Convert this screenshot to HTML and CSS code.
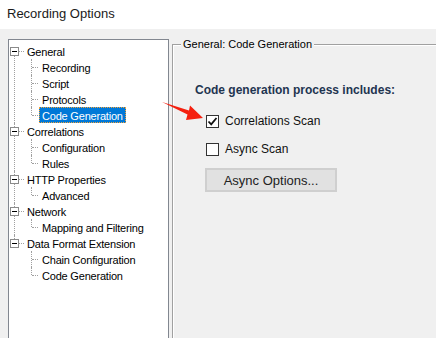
FILE: index.html
```html
<!DOCTYPE html>
<html lang="en">
<head>
  <meta charset="UTF-8">
  <title>Recording Options</title>
  <link rel="stylesheet" href="styles.css">
</head>
<body>
  <div class="titlebar">Recording Options</div>

  <div class="content">
    <div class="tree">
      <ul class="roots">
        <li>
          <div class="row"><span class="toggle"></span><span class="conn"></span><span class="label">General</span></div>
          <ul class="kids">
            <li><span class="label">Recording</span></li>
            <li><span class="label">Script</span></li>
            <li><span class="label">Protocols</span></li>
            <li><span class="label selected">Code Generation</span></li>
          </ul>
        </li>
        <li>
          <div class="row"><span class="toggle"></span><span class="conn"></span><span class="label">Correlations</span></div>
          <ul class="kids">
            <li><span class="label">Configuration</span></li>
            <li><span class="label">Rules</span></li>
          </ul>
        </li>
        <li>
          <div class="row"><span class="toggle"></span><span class="conn"></span><span class="label">HTTP Properties</span></div>
          <ul class="kids">
            <li><span class="label">Advanced</span></li>
          </ul>
        </li>
        <li>
          <div class="row"><span class="toggle"></span><span class="conn"></span><span class="label">Network</span></div>
          <ul class="kids">
            <li><span class="label">Mapping and Filtering</span></li>
          </ul>
        </li>
        <li>
          <div class="row"><span class="toggle"></span><span class="conn"></span><span class="label">Data Format Extension</span></div>
          <ul class="kids">
            <li><span class="label">Chain Configuration</span></li>
            <li><span class="label">Code Generation</span></li>
          </ul>
        </li>
      </ul>
    </div>

    <div class="group">
      <span class="group-title">General: Code Generation</span>
      <div class="heading">Code generation process includes:</div>
      <div class="options">
        <label class="check">
          <span class="box">
            <svg width="11" height="11" viewBox="0 0 11 11"><path d="M1.5 5.5 L4.2 8.3 L9.5 2" fill="none" stroke="#111" stroke-width="1.8"/></svg>
          </span>
          Correlations Scan
        </label>
        <label class="check">
          <span class="box"></span>
          Async Scan
        </label>
        <button class="btn">Async Options...</button>
      </div>
    </div>
  </div>

  <svg class="arrow" width="436" height="338" viewBox="0 0 436 338">
    <polygon points="162,102 189,110.5 190,105.5 203,118 186,120 187.5,114.5" fill="#f5200f"/>
  </svg>
</body>
</html>
```

FILE: styles.css
```css
body {
  margin: 0;
  width: 436px;
  height: 338px;
  overflow: hidden;
  background: #f0f0f0;
  font-family: "Liberation Sans", Arial, sans-serif;
  color: #000;
  position: relative;
}

.titlebar {
  height: 29px;
  line-height: 28px;
  padding-left: 7px;
  background: #fff;
  font-size: 13px;
  color: #1a1a1a;
}

.content {
  display: flex;
  align-items: flex-start;
  padding: 10px 0 0 8px;
}

/* Tree view */
.tree {
  width: 159px;
  height: 296px;
  background: #fff;
  border: 1px solid #828790;
  border-bottom: none;
  padding-top: 3px;
  font-size: 11px;
  letter-spacing: -0.2px;
  flex-shrink: 0;
}

.tree ul {
  list-style: none;
  margin: 0;
  padding: 0;
}

.roots > li {
  position: relative;
}

.roots > li::before {
  content: "";
  position: absolute;
  left: 5px;
  top: 0;
  bottom: 0;
  border-left: 1px dotted #a0a0a0;
}

.roots > li:first-child::before {
  top: 8px;
}

.roots > li:last-child::before {
  bottom: auto;
  height: 8px;
}

.row {
  display: flex;
  align-items: center;
  height: 16px;
  position: relative;
}

.toggle {
  width: 9px;
  height: 9px;
  box-sizing: border-box;
  margin-left: 1px;
  border: 1px solid #8a8a8a;
  background: #fff;
  position: relative;
  z-index: 1;
}

.toggle::after {
  content: "";
  position: absolute;
  left: 1px;
  top: 3px;
  width: 5px;
  height: 1px;
  background: #000;
}

.conn {
  width: 5px;
  border-top: 1px dotted #a0a0a0;
}

.label {
  display: inline-block;
  height: 16px;
  line-height: 16px;
  padding: 0 2px;
  border: 1px dotted transparent;
  box-sizing: border-box;
  white-space: nowrap;
}

.label.selected {
  background: #0078d7;
  color: #fff;
  border-color: #f2a33a;
  line-height: 15px;
  padding-top: 1px;
}

.kids {
  margin-left: 22px !important;
}

.kids > li {
  position: relative;
  height: 16px;
  padding-left: 8px;
}

.kids > li::before {
  content: "";
  position: absolute;
  left: 0;
  top: 0;
  bottom: 0;
  border-left: 1px dotted #a0a0a0;
}

.kids > li:last-child::before {
  bottom: auto;
  height: 8px;
}

.kids > li::after {
  content: "";
  position: absolute;
  left: 1px;
  top: 8px;
  width: 6px;
  border-top: 1px dotted #a0a0a0;
}

/* Group box */
.group {
  position: relative;
  flex: 1;
  height: 257px;
  margin: 5px 0 0 3px;
  padding: 37px 0 0 22px;
  border-left: 1px solid #a0a0a0;
  border-top: 1px solid #a0a0a0;
  box-shadow: inset 1px 1px 0 #fff;
}

.group-title {
  position: absolute;
  left: 8px;
  top: -8px;
  padding: 0 2px;
  background: #f0f0f0;
  font-size: 11px;
  line-height: 14px;
}

.heading {
  font-size: 12px;
  font-weight: bold;
  line-height: 16px;
  color: #1f3550;
}

.options {
  display: flex;
  flex-direction: column;
  align-items: flex-start;
  gap: 12px;
  margin: 15px 0 0 11px;
}

.check {
  display: flex;
  align-items: center;
  gap: 6px;
  height: 16px;
  font-size: 12px;
  color: #111;
}

.box {
  width: 13px;
  height: 13px;
  box-sizing: border-box;
  border: 1px solid #333;
  background: #fff;
  display: flex;
  align-items: center;
  justify-content: center;
}

.btn {
  margin: -1px 0 0 -1px;
  width: 132px;
  height: 24px;
  background: #e1e1e1;
  border: 2px solid #cfcfcf;
  font-family: "Liberation Sans", Arial, sans-serif;
  font-size: 13px;
  color: #222;
  padding: 0;
}

.arrow {
  position: absolute;
  left: 0;
  top: 0;
  pointer-events: none;
}
```
